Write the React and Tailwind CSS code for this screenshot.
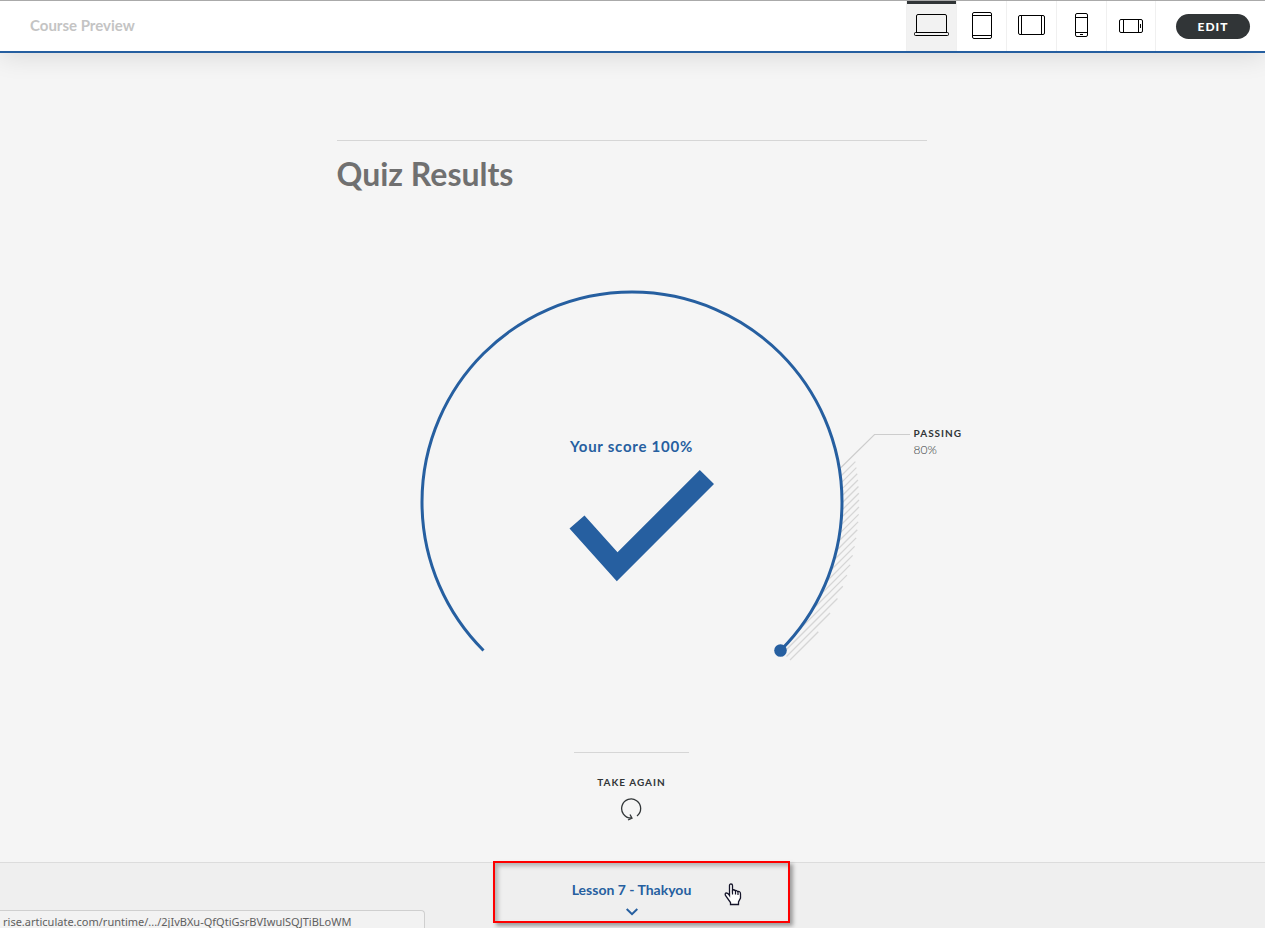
const devices = [
  { id: 'laptop', label: 'Laptop', Icon: LaptopIcon },
  { id: 'tablet', label: 'Tablet portrait', Icon: TabletIcon },
  { id: 'tablet-wide', label: 'Tablet landscape', Icon: TabletWideIcon },
  { id: 'phone', label: 'Phone portrait', Icon: PhoneIcon },
  { id: 'phone-wide', label: 'Phone landscape', Icon: PhoneWideIcon },
];

function LaptopIcon() {
  return (
    <svg width="35" height="22" viewBox="0 0 35 22" fill="none" stroke="#000" aria-hidden="true">
      <path d="M2.5 18.5V2Q2.5 0.5 4 0.5H31Q32.5 0.5 32.5 2V18.5" />
      <rect x="0.5" y="18.5" width="34" height="3" rx="1" />
    </svg>
  );
}

function TabletIcon() {
  return (
    <svg width="20" height="27" viewBox="0 0 20 27" fill="none" stroke="#000" aria-hidden="true">
      <rect x="0.5" y="0.5" width="19" height="26" rx="1.5" />
      <path d="M0.5 3.5H19.5M0.5 23.5H19.5" />
    </svg>
  );
}

function TabletWideIcon() {
  return (
    <svg width="27" height="20" viewBox="0 0 27 20" fill="none" stroke="#000" aria-hidden="true">
      <rect x="0.5" y="0.5" width="26" height="19" rx="1.5" />
      <path d="M3.5 0.5V19.5M23.5 0.5V19.5" />
    </svg>
  );
}

function PhoneIcon() {
  return (
    <svg width="13" height="24" viewBox="0 0 13 24" fill="none" stroke="#000" aria-hidden="true">
      <rect x="0.5" y="0.5" width="12" height="23" rx="1.5" />
      <path d="M0.5 4.5H12.5M0.5 19.5H12.5M5 21.5H8" />
    </svg>
  );
}

function PhoneWideIcon() {
  return (
    <svg width="24" height="16" viewBox="0 -2 24 16" fill="none" stroke="#000" aria-hidden="true">
      <rect x="0.5" y="0.5" width="23" height="13" rx="1.5" />
      <path d="M4.5 0.5V13.5M19.5 0.5V13.5M21.5 5V9" />
    </svg>
  );
}

const CENTER = 212;
const RADIUS = 210;
const HATCH_RADIUS = 227;

// Diagonal strokes outside the dial, covering the passing range
const hatches = Array.from({ length: 20 }, (_, i) => {
  const sum = 183 + i * 7;
  const inner = Math.sqrt(Math.max(0, 2 * RADIUS * RADIUS - sum * sum));
  const outer = Math.sqrt(2 * HATCH_RADIUS * HATCH_RADIUS - sum * sum);
  return {
    x1: CENTER + (sum + inner) / 2,
    y1: CENTER + (sum - inner) / 2,
    x2: CENTER + (sum + outer) / 2,
    y2: CENTER + (sum - outer) / 2,
  };
});

function ScoreDial() {
  return (
    <div className="relative h-[424px] w-[424px]">
      <svg
        className="absolute inset-0 overflow-visible"
        width="424"
        height="424"
        viewBox="0 0 424 424"
        fill="none"
        aria-hidden="true"
      >
        <g stroke="#d6d6d6" strokeWidth="1.3">
          {hatches.map((line) => (
            <line key={line.x1} {...line} />
          ))}
          <path d="M420.5 178L454.5 144.5H490" stroke="#cdcdcd" strokeWidth="1.2" />
        </g>
        <path d="M63.5 360.5A210 210 0 1 1 360.5 360.5" stroke="#265fa0" strokeWidth="3" />
        <circle cx="360.5" cy="360.5" r="6.3" fill="#265fa0" />
        <path d="M149.5 238.5L164.5 225.5L197.5 262.3L279.8 180L294 194L196.8 291.3Z" fill="#265fa0" />
      </svg>
      <p className="absolute inset-x-0 top-[146px] text-center text-[15px] leading-5 font-bold tracking-wider text-[#265fa0]">
        Your score 100%
      </p>
      <dl className="absolute top-[135px] left-[494px]">
        <dt className="text-[10px] leading-4 font-bold tracking-[1px] text-[#313537]">PASSING</dt>
        <dd className="text-xs leading-[18px] font-light text-[#313537]">80%</dd>
      </dl>
    </div>
  );
}

function HandCursor() {
  return (
    <svg
      className="absolute top-5 right-[46px]"
      width="18"
      height="23"
      viewBox="0 0 18 23"
      aria-hidden="true"
    >
      <path
        d="M5.5 12.5V2.5Q5.5 1 7 1Q8.5 1 8.5 2.5V7.5Q9.5 6 11 7.5Q12.5 6.8 13.5 8.5Q16.5 8 16.5 11V15L14.5 19V21.5H6.5V19.5L1.5 12.5Q0.5 10 2.5 10Q4 10 5.5 12.5Z"
        fill="#fff"
        stroke="#15152a"
        strokeWidth="1.3"
      />
      <path d="M8.5 7V11.5M11.5 8V11.5M14 9V12" stroke="#15152a" strokeWidth="1.2" />
    </svg>
  );
}

function App() {
  return (
    <div className="flex min-h-screen flex-col bg-[#f5f5f5] font-['Lato',sans-serif]">
      <header className="relative flex h-[53px] items-stretch border-t border-b-2 border-t-[#aaaaaa] border-b-[#265fa0] bg-white shadow-[0_4px_26px_rgba(0,0,0,0.11)]">
        <h1 className="flex-1 self-center pb-[2px] pl-[30px] text-[15px] leading-5 font-bold text-[#c4c4c4]">
          Course Preview
        </h1>
        <nav className="flex" aria-label="Preview size">
          {devices.map(({ id, label, Icon }) => (
            <button
              key={id}
              type="button"
              aria-label={label}
              className={`flex w-[50px] items-center justify-center border-l border-[#f0f0f0] pb-[2px] last:border-r ${
                id === 'laptop' ? 'bg-[#f2f2f2] shadow-[inset_0_3px_0_#313537]' : ''
              }`}
            >
              <Icon />
            </button>
          ))}
        </nav>
        <button
          type="button"
          className="mr-[15px] ml-5 h-[25px] w-[74px] self-center rounded-full bg-[#313537] pt-px text-xs font-black tracking-[1px] text-white"
        >
          EDIT
        </button>
      </header>

      <main className="mr-[2px] flex-1 px-4 pt-[87px]">
        <section className="mx-auto max-w-[590px]">
          <h2 className="border-t border-[#d6d6d6] pt-3 text-[32px] leading-[42px] font-bold text-[#707070]">
            Quiz Results
          </h2>
          <div className="flex justify-center pt-[95px]">
            <ScoreDial />
          </div>
          <div className="mx-auto mt-[38px] flex w-[115px] flex-col items-center border-t border-[#d6d6d6] pt-[21px]">
            <button
              type="button"
              className="flex flex-col items-center gap-2 text-[10px] leading-4 font-bold tracking-[1px] text-[#313537]"
            >
              TAKE AGAIN
              <svg width="24" height="24" viewBox="0 0 24 24" fill="none" stroke="#313537" strokeWidth="1.3" aria-hidden="true">
                <path d="M17 18A9.5 9.5 0 1 0 11 20" />
                <path d="M10 16.5L12 20.3L8 22" />
              </svg>
            </button>
          </div>
        </section>
      </main>

      <footer className="relative h-[66px] border-t border-[#dcdcdc] bg-[#efefef] pr-[2px]">
        <a
          href="#lesson-7"
          className="mx-auto flex w-[297px] flex-col items-center pt-[17px] text-sm leading-5 font-bold text-[#265fa0]"
        >
          Lesson 7 - Thakyou
          <svg className="mt-2" width="12" height="8" viewBox="0 0 12 8" fill="none" stroke="#265fa0" strokeWidth="2" aria-hidden="true">
            <path d="M0.7 1L6 6.2L11.3 1" />
          </svg>
        </a>
        <div className="pointer-events-none absolute -top-[2px] left-1/2 ml-[-140px] h-[62px] w-[297px] border-2 border-[#fe0000] shadow-[3px_3px_4px_rgba(0,0,0,0.35),inset_3px_3px_4px_rgba(0,0,0,0.25)]">
          <HandCursor />
        </div>
        <div className="absolute bottom-0 left-0 h-[18px] w-[425px] rounded-tr border-t border-r border-[#cfcfcf] bg-[#f2f2f2] pt-[3px] pl-[3px] font-['Noto_Sans','Open_Sans',sans-serif] text-[11px] leading-4 text-[#606060]">
          rise.articulate.com/runtime/.../2jIvBXu-QfQtiGsrBVIwulSQJTiBLoWM
        </div>
      </footer>
    </div>
  );
}

export default App;
